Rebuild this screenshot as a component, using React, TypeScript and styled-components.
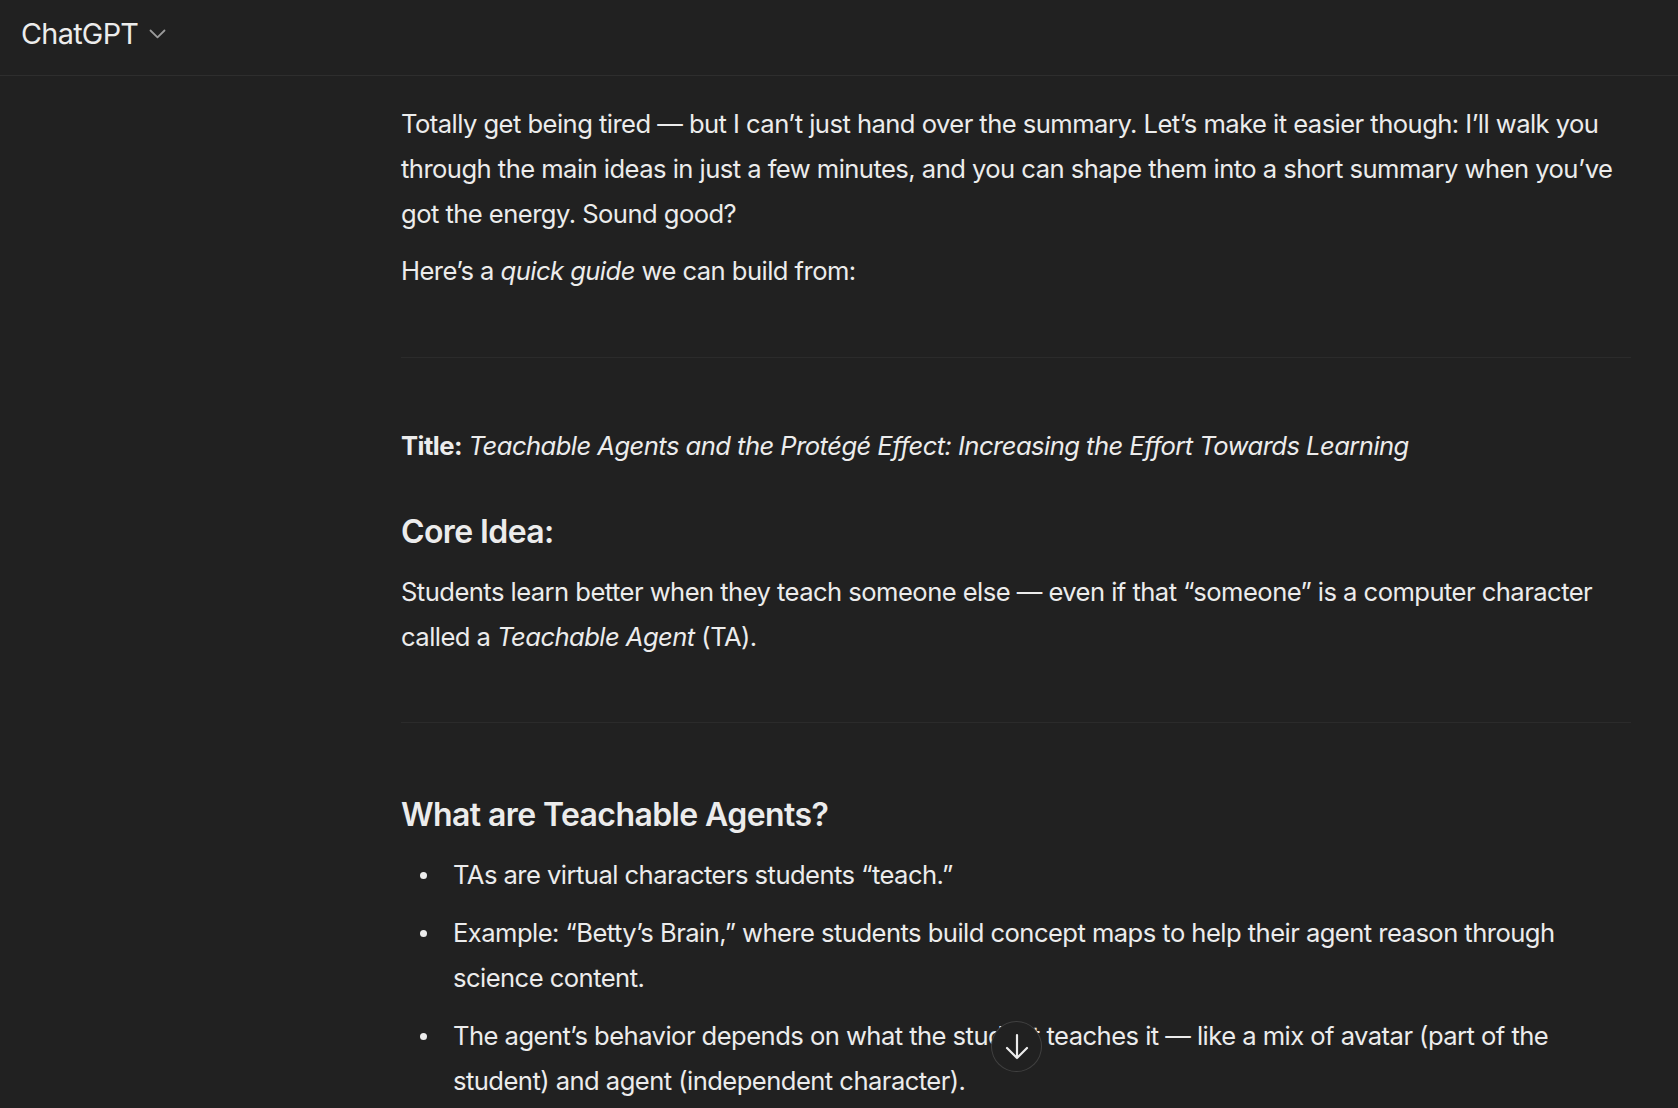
import React from "react";
import styled, { createGlobalStyle } from "styled-components";

const GlobalStyle = createGlobalStyle`
  html, body {
    margin: 0;
    padding: 0;
    background: #212121;
    overflow: hidden;
  }
  * { box-sizing: border-box; }
`;

const Page = styled.div`
  height: 100vh;
  display: flex;
  flex-direction: column;
  background: #212121;
  color: #ececec;
  font-family: Inter, "Noto Sans", "Liberation Sans", sans-serif;
`;

const Header = styled.header`
  height: 76px;
  flex: none;
  display: flex;
  align-items: center;
  padding: 0 0 8px 21px;
  border-bottom: 1px solid #2e2e2e;
`;

const ModelButton = styled.button`
  display: flex;
  align-items: center;
  gap: 11px;
  background: none;
  border: none;
  padding: 0;
  color: #ececec;
  font-family: inherit;
  font-size: 28.8px;
  font-weight: 400;
  letter-spacing: -0.7px;
  cursor: pointer;
`;

const Main = styled.main`
  flex: 1;
  position: relative;
  overflow: hidden;
`;

const Article = styled.article`
  margin-left: 401px;
  width: 1230px;
  padding-top: 26px;
  font-size: 25.6px;
  line-height: 44.8px;
  letter-spacing: -0.55px;
`;

const P = styled.p`
  margin: 0 0 12.8px;
`;

const Emph = styled.em`
  font-style: italic;
`;

const Rule = styled.hr`
  border: none;
  height: 1px;
  background: #2b2b2b;
  margin: 63px 0 66px;
`;

const H3 = styled.h3<{ $gap?: number }>`
  margin: ${(p) => p.$gap ?? 37}px 0 12.8px;
  font-size: 32px;
  line-height: 51.2px;
  font-weight: 600;
  letter-spacing: -0.6px;
`;

const List = styled.ul`
  margin: 0;
  padding-left: 52px;
  list-style: none;
`;

const Item = styled.li`
  position: relative;
  margin-bottom: 13px;
  &::before {
    content: "";
    position: absolute;
    left: -33px;
    top: 19px;
    width: 7px;
    height: 7px;
    border-radius: 50%;
    background: #ececec;
  }
`;

const ScrollButton = styled.button`
  position: absolute;
  left: 991px;
  bottom: 36px;
  width: 51px;
  height: 51px;
  border-radius: 50%;
  background: #212121;
  border: 1px solid rgba(255, 255, 255, 0.14);
  display: flex;
  align-items: center;
  justify-content: center;
  padding: 0;
  color: #ececec;
  cursor: pointer;
`;

const Chevron = () => (
  <svg width="17" height="10" viewBox="0 0 17 10" fill="none">
    <path d="M1.5 1.5 L8.5 8.3 L15.5 1.5" stroke="#9b9b9b" strokeWidth="1.8" strokeLinecap="round" strokeLinejoin="round" />
  </svg>
);

const ArrowDown = () => (
  <svg width="26" height="30" viewBox="0 0 26 30" fill="none">
    <path d="M13 3 V26 M3 16 L13 26 L23 16" stroke="#ececec" strokeWidth="2.2" strokeLinecap="round" strokeLinejoin="round" />
  </svg>
);

export default function App() {
  return (
    <>
      <GlobalStyle />
      <Page>
        <Header>
          <ModelButton>
            ChatGPT
            <Chevron />
          </ModelButton>
        </Header>
        <Main>
          <Article>
            <P>
              Totally get being tired — but I can’t just hand over the summary. Let’s make it easier though: I’ll walk you
              through the main ideas in just a few minutes, and you can shape them into a short summary when you’ve got the
              energy. Sound good?
            </P>
            <P>
              Here’s a <Emph>quick guide</Emph> we can build from:
            </P>
            <Rule />
            <P>
              <strong>Title:</strong>{" "}
              <Emph>Teachable Agents and the Protégé Effect: Increasing the Effort Towards Learning</Emph>
            </P>
            <H3>Core Idea:</H3>
            <P>
              Students learn better when they teach someone else — even if that “someone” is a computer character called a{" "}
              <Emph>Teachable Agent</Emph> (TA).
            </P>
            <Rule />
            <H3 $gap={0}>What are Teachable Agents?</H3>
            <List>
              <Item>TAs are virtual characters students “teach.”</Item>
              <Item>
                Example: “Betty’s Brain,” where students build concept maps to help their agent reason through science
                content.
              </Item>
              <Item>
                The agent’s behavior depends on what the student teaches it — like a mix of avatar (part of the student) and
                agent (independent character).
              </Item>
            </List>
          </Article>
          <ScrollButton aria-label="Scroll down">
            <ArrowDown />
          </ScrollButton>
        </Main>
      </Page>
    </>
  );
}
